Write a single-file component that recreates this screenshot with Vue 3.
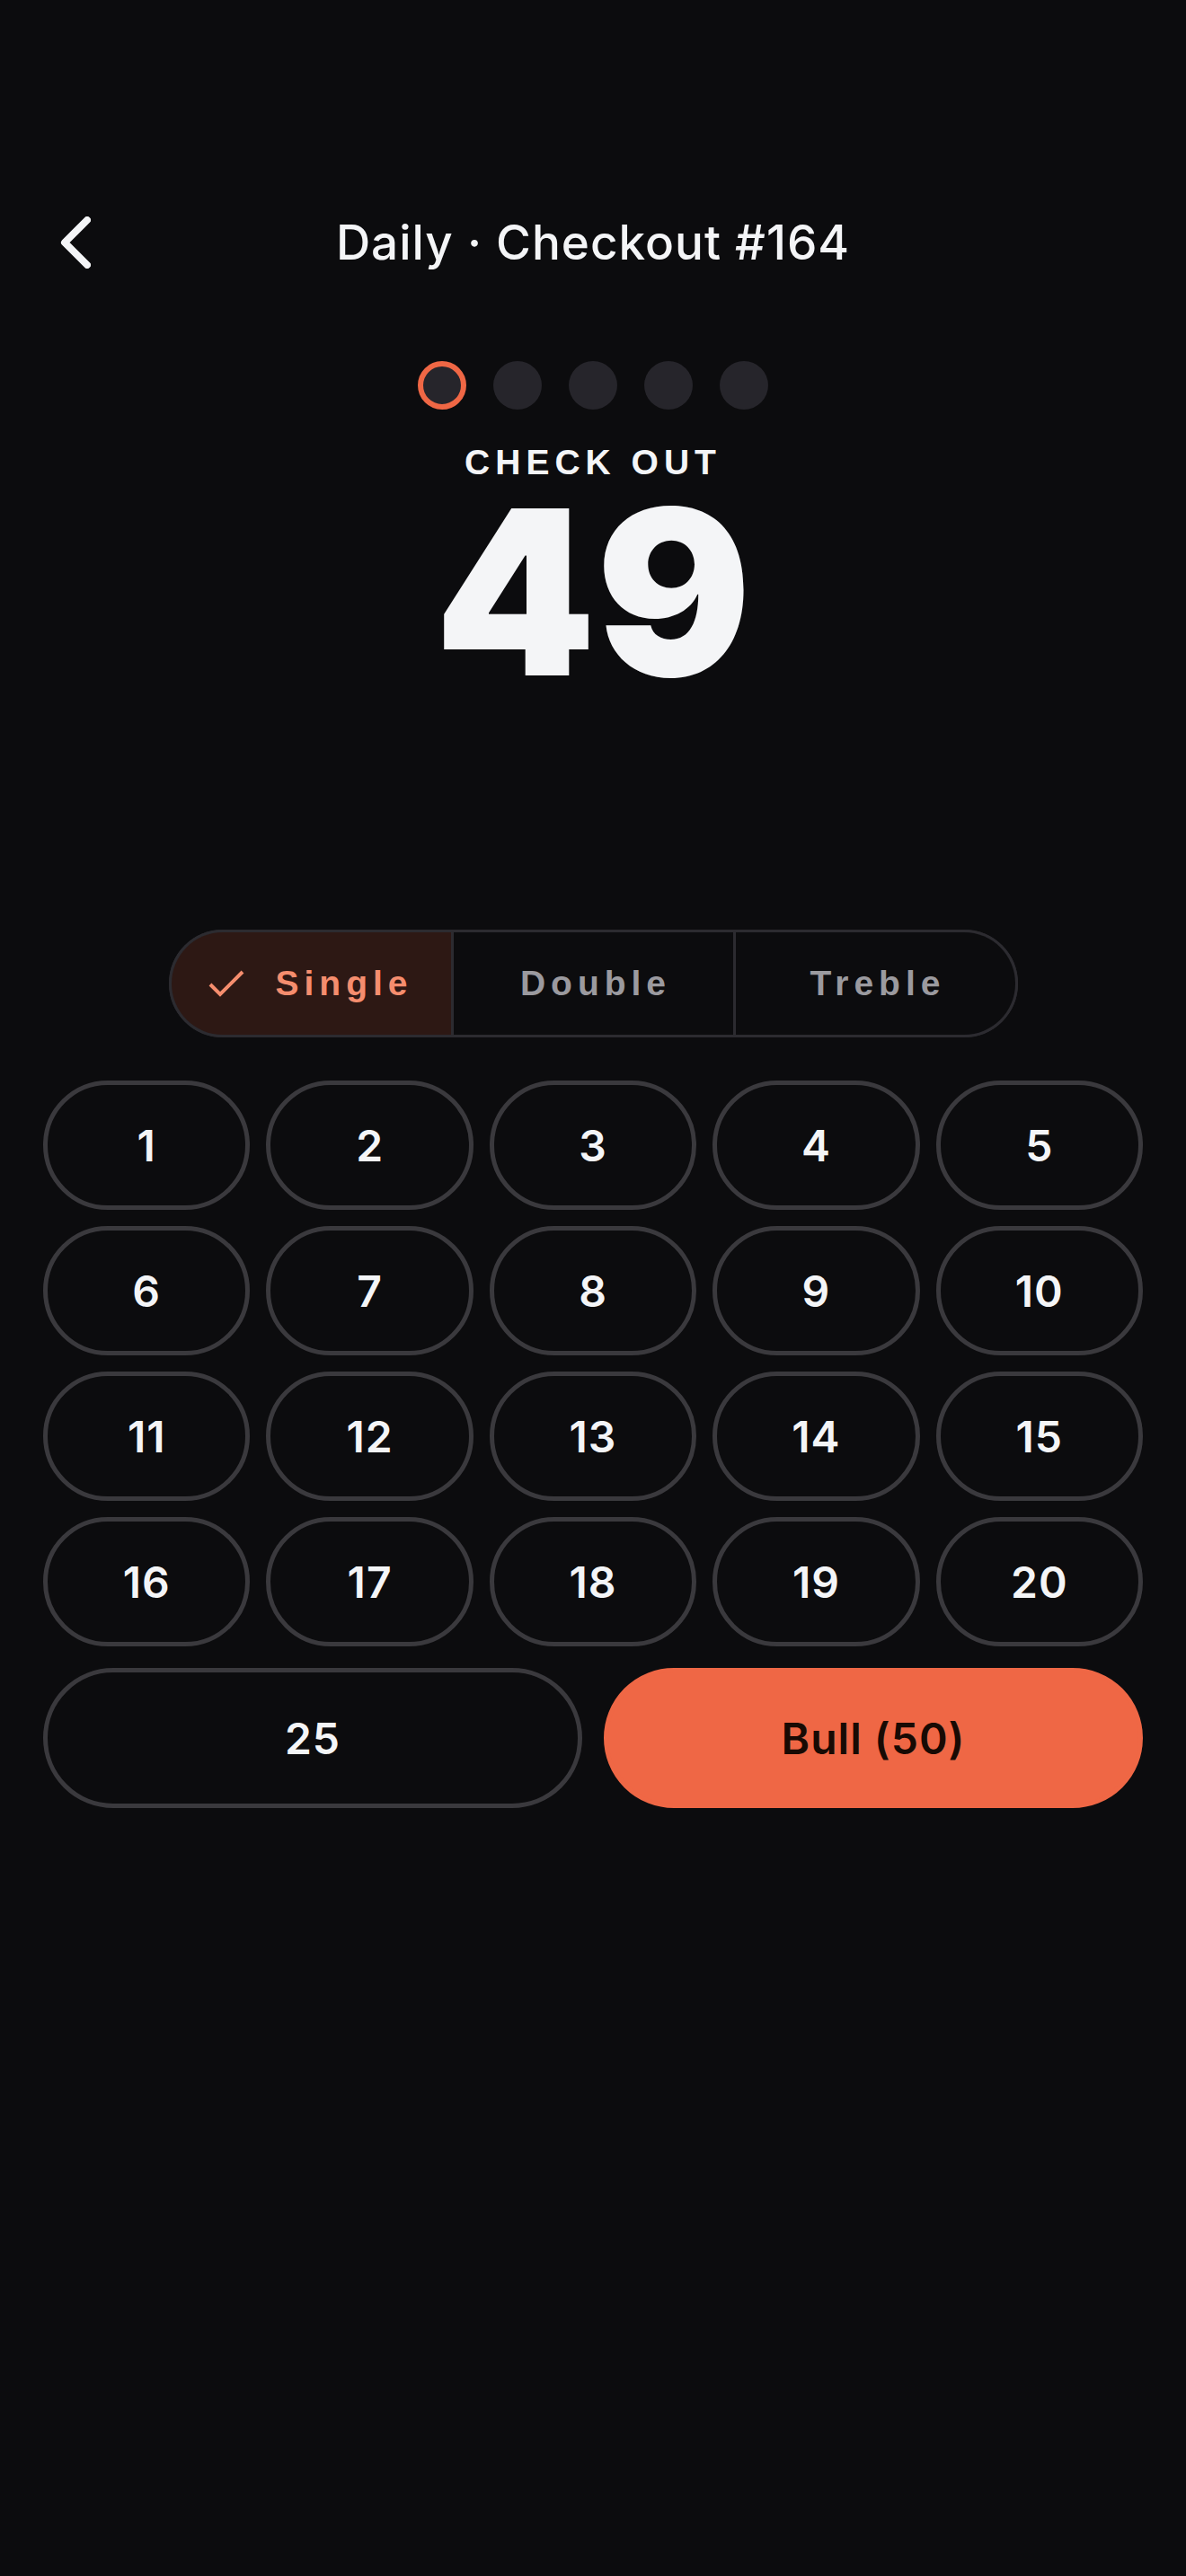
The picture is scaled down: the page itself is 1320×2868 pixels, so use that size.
<template>
    <main class="screen">
        <header class="top-bar">
            <button class="back-btn" type="button" aria-label="Back">
                <svg class="back-icon" viewBox="0 0 34 58" aria-hidden="true">
                    <path d="M30 4 L5 29 L30 54" />
                </svg>
            </button>
            <h1 class="title">Daily · Checkout #164</h1>
        </header>

        <ol class="progress" aria-label="Progress">
            <li v-for="n in rounds" :key="n" class="dot" :class="{ current: n === currentRound }"></li>
        </ol>

        <section class="target">
            <h2 class="target-label">CHECK OUT</h2>
            <p class="target-score">{{ remaining }}</p>
        </section>

        <fieldset class="segments">
            <label
                v-for="option in multipliers"
                :key="option"
                class="segment"
                :class="{ selected: option === multiplier }"
            >
                <input v-model="multiplier" class="segment-input" type="radio" name="multiplier" :value="option" />
                <svg v-if="option === multiplier" class="check-icon" viewBox="0 0 40 30" aria-hidden="true">
                    <path d="M2 16 L13 27 L38 2" />
                </svg>
                <span>{{ option }}</span>
            </label>
        </fieldset>

        <div class="keypad">
            <button v-for="n in 20" :key="n" class="key" type="button">{{ n }}</button>
        </div>
        <div class="bulls">
            <button class="key key-large" type="button">25</button>
            <button class="key key-large key-bull" type="button">Bull (50)</button>
        </div>
    </main>
</template>

<script setup>
import { ref } from 'vue';

const rounds = 5;
const currentRound = ref(1);
const remaining = ref(49);

const multipliers = ['Single', 'Double', 'Treble'];
const multiplier = ref('Single');
</script>

<style>
body {
    background-color: #0c0c0e;
}
</style>

<style scoped>
.screen {
    box-sizing: border-box;
    min-height: 100vh;
    padding: 186px 48px 48px;
    background-color: #0c0c0e;
    color: #f4f5f7;
    font-family: Inter, sans-serif;
}

.top-bar {
    display: grid;
    grid-template-columns: 72px 1fr 72px;
    align-items: center;
    height: 168px;
}

.back-btn {
    display: flex;
    align-items: center;
    justify-content: center;
    height: 96px;
    padding: 0;
    background: none;
    border: none;
    color: inherit;
    cursor: pointer;
}

.back-icon {
    width: 34px;
    height: 58px;
    fill: none;
    stroke: currentColor;
    stroke-width: 8;
    stroke-linecap: round;
    stroke-linejoin: round;
}

.title {
    margin: 0;
    font-size: 53px;
    font-weight: 500;
    line-height: 64px;
    text-align: center;
    letter-spacing: 1px;
}

.progress {
    display: flex;
    justify-content: center;
    gap: 30px;
    margin: 48px 0 0;
    padding: 0;
    list-style: none;
}

.dot {
    box-sizing: border-box;
    width: 54px;
    height: 54px;
    border-radius: 50%;
    background-color: #26252b;
}

.dot.current {
    border: 6px solid #ef6745;
}

.target {
    display: flex;
    flex-direction: column;
    align-items: center;
    box-sizing: border-box;
    height: 579px;
    padding-top: 36px;
}

.target-label {
    margin: 0;
    font-family: "Liberation Sans", sans-serif;
    font-size: 39px;
    font-weight: 700;
    line-height: 45px;
    letter-spacing: 6px;
}

.target-score {
    margin: 0;
    font-size: 256px;
    font-weight: 900;
    line-height: 244px;
}

.segments {
    display: grid;
    grid-template-columns: repeat(3, 1fr);
    gap: 3px;
    box-sizing: border-box;
    width: 80%;
    max-width: 945px;
    height: 120px;
    margin: 0 auto;
    padding: 0;
    border: 3px solid #2c2b30;
    border-radius: 60px;
    background-color: #2c2b30;
    overflow: hidden;
}

.segment {
    display: flex;
    align-items: center;
    justify-content: center;
    gap: 34px;
    padding-left: 6px;
    background-color: #0c0c0e;
    color: #9b9a9f;
    font-family: "Liberation Sans", sans-serif;
    font-size: 39px;
    font-weight: 700;
    letter-spacing: 6px;
    cursor: pointer;
}

.segment.selected {
    padding-left: 0;
    background-color: #2d1814;
    color: #f58d6e;
}

.segment-input {
    position: absolute;
    opacity: 0;
    pointer-events: none;
}

.check-icon {
    width: 40px;
    height: 30px;
    fill: none;
    stroke: currentColor;
    stroke-width: 4;
}

.keypad {
    display: grid;
    grid-template-columns: repeat(5, 1fr);
    gap: 18px;
    margin-top: 48px;
}

.key {
    box-sizing: border-box;
    height: 144px;
    padding: 0;
    border: 5px solid #3a393d;
    border-radius: 78px;
    background: none;
    color: inherit;
    font-family: inherit;
    font-size: 48px;
    font-weight: 600;
    letter-spacing: 1px;
    cursor: pointer;
}

.bulls {
    display: grid;
    grid-template-columns: 1fr 1fr;
    gap: 24px;
    margin-top: 24px;
}

.key-large {
    height: 156px;
}

.key-bull {
    border-color: #ef6745;
    background-color: #ef6745;
    color: #180a04;
}
</style>
